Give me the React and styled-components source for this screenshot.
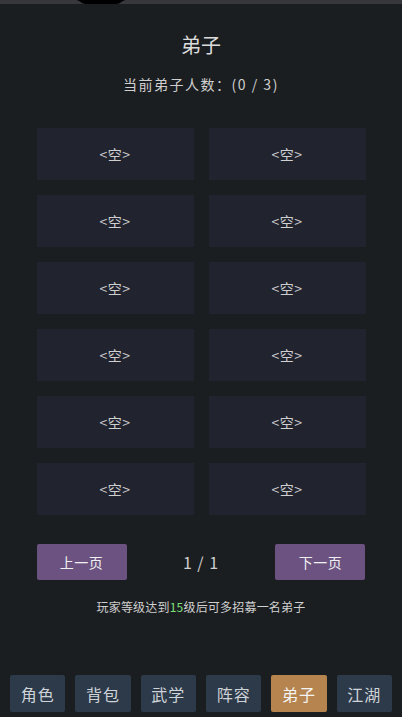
import React from 'react';
import styled, { createGlobalStyle } from 'styled-components';

const GlobalStyle = createGlobalStyle`
  html, body {
    margin: 0;
    padding: 0;
    background: #1b1e21;
  }
  body {
    font-family: "Noto Sans CJK SC", "Noto Sans", sans-serif;
    color: #d4d4d4;
  }
`;

const Screen = styled.div`
  width: 402px;
  min-height: 717px;
  display: flex;
  flex-direction: column;
  background: #1b1e21;
`;

const TopStrip = styled.div`
  height: 4px;
  background: #37383c;
  position: relative;
  svg {
    position: absolute;
    left: 76px;
    top: 0;
  }
`;

const Title = styled.h1`
  margin: 27px 0 0;
  font-size: 20px;
  line-height: 28px;
  font-weight: 400;
  text-align: center;
  color: #dcdcdc;
`;

const Subtitle = styled.div`
  margin-top: 15px;
  font-size: 14px;
  line-height: 20px;
  letter-spacing: 1.5px;
  text-align: center;
  color: #cfcfcf;
`;

const SlotGrid = styled.div`
  width: 329px;
  margin: 34px auto 0;
  display: grid;
  grid-template-columns: repeat(2, 1fr);
  gap: 15px;
`;

const Slot = styled.div`
  height: 52px;
  background: #21232f;
  display: flex;
  align-items: center;
  justify-content: center;
  font-size: 14px;
  letter-spacing: 0.5px;
  color: #cfcfcf;
`;

const Pager = styled.div`
  width: 329px;
  margin: 29px auto 0;
  display: flex;
  align-items: center;
  justify-content: space-between;
`;

const PageButton = styled.button`
  width: 90px;
  height: 36px;
  border: none;
  border-radius: 2px;
  background: #6b5280;
  color: #f0f0f0;
  font-family: inherit;
  font-size: 14px;
  letter-spacing: 0.5px;
  padding: 0;
`;

const PageInfo = styled.div`
  font-size: 16px;
  color: #cfcfcf;
  letter-spacing: 1px;
`;

const Tip = styled.div`
  margin-top: 18px;
  font-size: 12px;
  line-height: 18px;
  letter-spacing: 0.2px;
  text-align: center;
  color: #cfcfcf;
`;

const Highlight = styled.span`
  color: #7ee07a;
`;

const TabBar = styled.nav`
  margin-top: auto;
  padding: 0 10px 5px;
  display: flex;
  gap: 10px;
`;

const Tab = styled.button`
  flex: 1;
  height: 37px;
  border: none;
  border-radius: 2px;
  padding: 0;
  background: ${p => (p.$active ? '#b5844f' : '#2d3a4a')};
  color: ${p => (p.$active ? '#f3f3f3' : '#cfd3d8')};
  font-family: inherit;
  font-size: 16px;
  letter-spacing: 1px;
`;

const tabs = ['角色', '背包', '武学', '阵容', '弟子', '江湖'];

export default function App() {
  return (
    <>
      <GlobalStyle />
      <Screen>
        <TopStrip>
          <svg width="50" height="4" viewBox="0 0 50 4">
            <path d="M0 0 H50 C46 0 45 4 40 4 H10 C5 4 4 0 0 0 Z" fill="#000" />
          </svg>
        </TopStrip>
        <Title>弟子</Title>
        <Subtitle>当前弟子人数：(0 / 3)</Subtitle>
        <SlotGrid>
          {Array.from({ length: 12 }).map((_, i) => (
            <Slot key={i}>&lt;空&gt;</Slot>
          ))}
        </SlotGrid>
        <Pager>
          <PageButton>上一页</PageButton>
          <PageInfo>1 / 1</PageInfo>
          <PageButton>下一页</PageButton>
        </Pager>
        <Tip>
          玩家等级达到<Highlight>15</Highlight>级后可多招募一名弟子
        </Tip>
        <TabBar>
          {tabs.map(t => (
            <Tab key={t} $active={t === '弟子'}>{t}</Tab>
          ))}
        </TabBar>
      </Screen>
    </>
  );
}
